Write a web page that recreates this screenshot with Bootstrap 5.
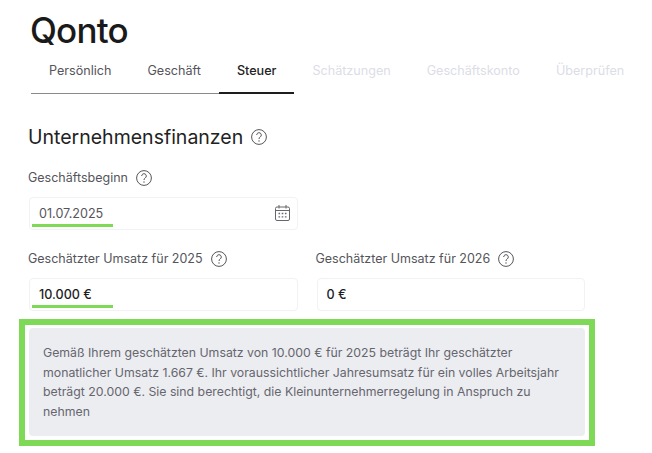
<!DOCTYPE html>
<html lang="de">
<head>
  <meta charset="UTF-8" />
  <meta name="viewport" content="width=device-width, initial-scale=1.0"/>
  <title>Qonto</title>
  <link href="https://cdn.jsdelivr.net/npm/bootstrap@5.3.0/dist/css/bootstrap.min.css" rel="stylesheet"/>
  <style>
    body { font-family: "Inter", "Liberation Sans", sans-serif; background: #fff; color: #222; overflow: hidden; }
    .page-wrap { width: 652px; height: 453px; padding: 0 57px 0 19px; }
    .brand-name { font-weight: 500; font-size: 35px; line-height: 40px; letter-spacing: -.8px; margin-left: 11px; padding-top: 10px; height: 51px; color: #1a1a1a; }
    .step-bar { margin-left: 12px; flex-wrap: nowrap; width: 620px; }
    .step-bar .nav-link { font-size: 12.6px; line-height: 16px; padding: 12px 18px 14px; color: #55555b; white-space: nowrap; border-bottom: 1px solid #8a8a8a; height: 43px; }
    .step-bar .nav-link.active { color: #222; font-weight: 500; border-bottom: 2px solid #1d1d1f; }
    .step-bar .nav-link.disabled { color: #dcdde6; border-bottom: 0; }
    .page-title { font-size: 19.5px; font-weight: 400; line-height: 24px; margin: 31px 0 0 9px; color: #222; }
    .help-icon { flex: none; margin-left: 8px; color: #55555b; }
    .field-area { padding: 0 10px; }
    .field-row { --bs-gutter-x: 19px; --bs-gutter-y: 0; }
    .field-top { margin-top: 20px; }
    .field-next { margin-top: 20px; }
    .field-label { font-size: 12.5px; line-height: 18px; color: #55555b; margin: 0 0 10px -1px; }
    .field-box { position: relative; }
    .field-box .form-control { height: 33px; border: 1px solid #f2f2f4; border-radius: 4px; font-size: 12.6px; padding: 0 9px 1px; color: #1d1d1f; font-weight: 500; box-shadow: none; }
    .field-box .date-value { color: #55555b; font-weight: 400; }
    .field-mark { position: absolute; left: 3px; top: 27px; width: 81px; height: 3px; background: #7ed957; }
    .cal-icon { position: absolute; right: 7px; top: 7px; color: #66666c; }
    .callout-frame { border: 6px solid #7ed957; padding: 3px 4px 4px; margin-top: 8px; height: 127px; }
    .callout-text { background: #ecedf1; border-radius: 4px; height: 108px; padding: 15px 14px 0; font-size: 12.3px; line-height: 19.7px; color: #66666e; }
  </style>
</head>
<body>
  <svg width="0" height="0" class="d-block">
    <symbol id="help" viewBox="0 0 16 16">
      <circle cx="8" cy="8" r="7.4" fill="none" stroke="currentColor" stroke-width="1"/>
      <path d="M5.7 6a2.3 2.3 0 1 1 3.6 1.9c-.9.6-1.3 1-1.3 2.1" fill="none" stroke="currentColor" stroke-width="1"/>
      <circle cx="8" cy="12" r=".7" fill="currentColor"/>
    </symbol>
  </svg>
  <div class="page-wrap">
    <div class="brand-name">Qonto</div>

    <ul class="nav step-bar">
      <li class="nav-item"><a class="nav-link" href="#">Persönlich</a></li>
      <li class="nav-item"><a class="nav-link" href="#">Geschäft</a></li>
      <li class="nav-item"><a class="nav-link active" href="#">Steuer</a></li>
      <li class="nav-item"><a class="nav-link disabled" href="#">Schätzungen</a></li>
      <li class="nav-item"><a class="nav-link disabled" href="#">Geschäftskonto</a></li>
      <li class="nav-item"><a class="nav-link disabled" href="#">Überprüfen</a></li>
    </ul>

    <h1 class="page-title d-flex align-items-center">Unternehmensfinanzen <svg class="help-icon" width="16" height="16"><use href="#help"/></svg></h1>

    <div class="field-area">
      <div class="row field-row field-top">
        <div class="col-6">
          <label class="field-label d-flex align-items-center">Geschäftsbeginn <svg class="help-icon" width="16" height="16"><use href="#help"/></svg></label>
          <div class="field-box">
            <input type="text" class="form-control date-value" value="01.07.2025"/>
            <span class="field-mark"></span>
            <svg class="cal-icon" width="17" height="18" viewBox="0 0 17 18" fill="none" stroke="currentColor" stroke-width="1">
              <rect x="1.5" y="3" width="14" height="13.5" rx="1.5"/>
              <path d="M1.5 6.5h14M5 1v3.5M12 1v3.5"/>
              <path d="M4.5 9.5h1.6M7.7 9.5h1.6M10.9 9.5h1.6M4.5 12.8h1.6M7.7 12.8h1.6M10.9 12.8h1.6" stroke-width="1.3"/>
            </svg>
          </div>
        </div>
      </div>
      <div class="row field-row field-next">
        <div class="col-6">
          <label class="field-label d-flex align-items-center">Geschätzter Umsatz für 2025 <svg class="help-icon" width="16" height="16"><use href="#help"/></svg></label>
          <div class="field-box">
            <input type="text" class="form-control" value="10.000 €"/>
            <span class="field-mark"></span>
          </div>
        </div>
        <div class="col-6">
          <label class="field-label d-flex align-items-center">Geschätzter Umsatz für 2026 <svg class="help-icon" width="16" height="16"><use href="#help"/></svg></label>
          <div class="field-box">
            <input type="text" class="form-control" value="0 €"/>
          </div>
        </div>
      </div>
    </div>

    <div class="callout-frame">
      <div class="callout-text">Gemäß Ihrem geschätzten Umsatz von 10.000 € für 2025 beträgt Ihr geschätzter monatlicher Umsatz 1.667 €. Ihr voraussichtlicher Jahresumsatz für ein volles Arbeitsjahr beträgt 20.000 €. Sie sind berechtigt, die Kleinunternehmerregelung in Anspruch zu nehmen</div>
    </div>
  </div>
</body>
</html>
